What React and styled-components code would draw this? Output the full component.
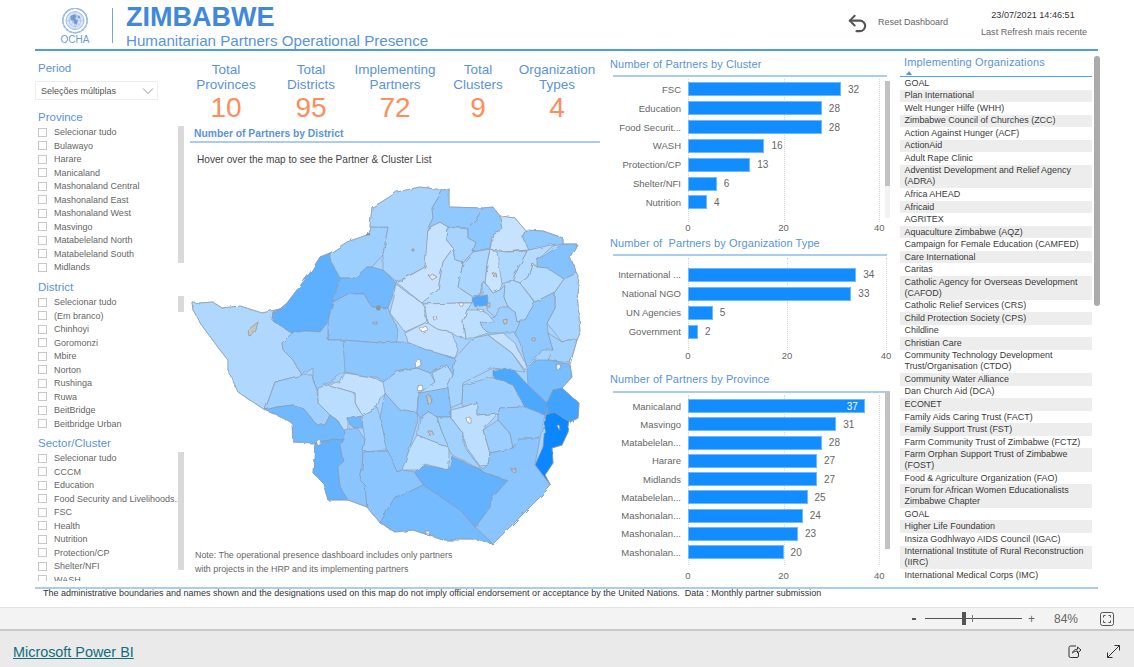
import React from 'react'
import styled, { createGlobalStyle } from 'styled-components'
import { Undo2 } from 'lucide-react'

const FONT = '"Liberation Sans", Arial, sans-serif'
const BLUE = '#5a93dc'

const provinces = ['Selecionar tudo', 'Bulawayo', 'Harare', 'Manicaland', 'Mashonaland Central', 'Mashonaland East', 'Mashonaland West', 'Masvingo', 'Matabeleland North', 'Matabeleland South', 'Midlands']
const districts = ['Selecionar tudo', '(Em branco)', 'Chinhoyi', 'Goromonzi', 'Mbire', 'Norton', 'Rushinga', 'Ruwa', 'BeitBridge', 'Beitbridge Urban']
const sectors = ['Selecionar tudo', 'CCCM', 'Education', 'Food Security and Livelihoods...', 'FSC', 'Health', 'Nutrition', 'Protection/CP', 'Shelter/NFI', 'WASH']

const kpis = [
  { lines: ['Total', 'Provinces'], value: 10, width: 72 },
  { lines: ['Total', 'Districts'], value: 95, width: 98 },
  { lines: ['Implementing', 'Partners'], value: 72, width: 70 },
  { lines: ['Total', 'Clusters'], value: 9, width: 96 },
  { lines: ['Organization', 'Types'], value: 4, width: 62 },
]

const clusterData = [['FSC', 32], ['Education', 28], ['Food Securit...', 28], ['WASH', 16], ['Protection/CP', 13], ['Shelter/NFI', 6], ['Nutrition', 4]]
const orgTypeData = [['International ...', 34], ['National NGO', 33], ['UN Agencies', 5], ['Government', 2]]
const provinceData = [['Manicaland', 37], ['Masvingo', 31], ['Matabelelan...', 28], ['Harare', 27], ['Midlands', 27], ['Matabelelan...', 25], ['Mashonalan...', 24], ['Mashonalan...', 23], ['Mashonalan...', 20]]

const orgs = [
  'GOAL', 'Plan International', 'Welt Hunger Hilfe (WHH)', 'Zimbabwe Council of Churches (ZCC)', 'Action Against Hunger (ACF)', 'ActionAid', 'Adult Rape Clinic',
  'Adventist Development and Relief Agency (ADRA)', 'Africa AHEAD', 'Africaid', 'AGRITEX', 'Aquaculture Zimbabwe (AQZ)', 'Campaign for Female Education (CAMFED)', 'Care International', 'Caritas',
  'Catholic Agency for Overseas Development (CAFOD)', 'Catholic Relief Services (CRS)', 'Child Protection Society (CPS)', 'Childline', 'Christian Care',
  'Community Technology Development Trust/Organisation (CTDO)', 'Community Water Alliance', 'Dan Church Aid (DCA)', 'ECONET', 'Family Aids Caring Trust (FACT)', 'Family Support Trust (FST)',
  'Farm Community Trust of Zimbabwe (FCTZ)', 'Farm Orphan Support Trust of Zimbabwe (FOST)', 'Food & Agriculture Organization (FAO)', 'Forum for African Women Educationalists Zimbabwe Chapter',
  'GOAL', 'Higher Life Foundation', 'Insiza Godhlwayo AIDS Council (IGAC)', 'International Institute of Rural Reconstruction (IIRC)', 'International Medical Corps (IMC)',
]

const outline = '192,302 200,303 213,302 222,308 240,306 262,313 280,309 287,303 310,273 320,257 330,253 347,242 367,235 370,227 372,207 380,203 397,192 420,187 443,190 449,188 449,207 483,208 493,207 500,216 515,218 525,230 543,231 563,238 563,244 577,244 570,257 577,273 579,277 577,293 579,317 580,333 577,340 570,365 572,377 562,388 573,398 579,403 578,418 570,422 568,432 562,445 552,448 553,463 545,475 551,486 493,544 477,540 443,540 413,530 395,532 380,523 367,507 348,500 328,500 323,483 313,473 315,443 293,442 292,423 287,420 265,410 247,398 238,392 228,370 228,360 220,350 203,327 193,310'

const districtShapes = [
  ['#b0d8ff', '192,302 200,303 213,302 222,308 240,306 262,313 280,309 273,312 272,320 292,333 282,343 283,350 293,360 302,375 275,382 265,410 247,398 238,392 228,370 228,360 220,350 203,327 193,310'],
  ['#5cb0ff', '280,309 287,303 310,273 320,257 330,253 332,263 340,278 333,300 330,313 328,322 320,332 305,331 292,333 272,320 273,312'],
  ['#9ed0ff', '330,253 347,242 367,235 370,227 388,227 383,255 372,267 367,267 355,278 340,278 332,263'],
  ['#a6d4ff', '372,207 380,203 397,192 420,187 443,190 432,208 433,218 428,228 427,250 425,267 397,282 383,270 383,255 388,227 370,227'],
  ['#70b8ff', '340,278 355,278 367,267 372,267 383,270 397,284 388,308 372,307 363,293 350,293 333,302'],
  ['#8cc6ff', '333,302 350,293 363,293 372,307 388,308 390,313 398,330 397,342 380,343 343,340 328,340 328,322 330,313'],
  ['#94cbff', '292,333 305,331 320,332 328,322 328,340 343,340 348,370 317,390 313,380 313,368 302,375 293,360 283,350 282,343'],
  ['#8cc6ff', '343,340 380,343 397,342 407,342 427,350 455,358 453,375 447,365 430,373 417,368 397,372 383,382 377,377 370,377 345,372'],
  ['#c6e2ff', '397,283 425,267 428,228 440,222 448,227 447,240 453,248 443,262 438,290 422,303'],
  ['#b5dbff', '422,303 438,290 443,262 453,248 455,260 463,263 458,287 473,297 472,303 460,303 423,304'],
  ['#a7d4ff', '448,227 468,229 468,238 476,242 473,252 463,263 455,260 453,248 447,240'],
  ['#90c9ff', '443,190 449,188 449,207 483,208 477,218 468,228 448,227 440,222 428,228 433,218 432,208'],
  ['#8dc7ff', '483,208 493,207 500,216 502,230 493,233 490,248 473,252 476,242 468,238 468,228 477,218'],
  ['#c6e2ff', '500,216 515,218 525,230 523,238 529,250 507,252 490,250 493,233 502,230'],
  ['#90c9ff', '525,230 543,231 563,238 563,244 529,250 523,238'],
  ['#83c2ff', '537,260 563,244 577,244 570,257 577,273 564,279 547,268 537,267'],
  ['#b5dbff', '507,252 529,250 555,244 537,260 537,267 532,263 528,277 520,283 512,280 527,251'],
  ['#add8ff', '490,250 507,252 527,251 512,280 502,284'],
  ['#c8e4ff', '490,250 497,252 502,284 500,290 493,293 485,283 487,263'],
  ['#abd6ff', '473,252 490,249 487,263 485,283 482,283 480,296 473,297 458,287 463,263'],
  ['#a7d4ff', '482,283 485,283 493,293 500,290 505,285 504,297 508,307 495,317 487,310 488,295 482,296'],
  ['#b0d9ff', '512,280 520,283 535,303 525,320 517,322 515,312 508,307 504,297 505,285'],
  ['#b5dbff', '520,283 528,277 532,263 537,267 547,268 564,279 555,292 535,302'],
  ['#a9d5ff', '564,279 577,273 579,277 577,293 579,317 580,333 577,340 568,340 562,342 547,323 555,308 555,292'],
  ['#8ec8ff', '535,302 555,292 555,308 547,323 548,333 553,350 542,350 535,360 527,367 520,343 515,333 520,320 525,320'],
  ['#a0d1ff', '548,333 562,342 568,340 577,340 570,363 562,362 548,360 553,350'],
  ['#9ccfff', '480,322 495,317 500,307 508,307 515,312 517,322 520,322 515,333 503,333 488,333 482,327'],
  ['#c2e1ff', '488,335 503,333 515,343 527,367 525,370 512,353'],
  ['#a6d4ff', '455,358 473,338 488,335 512,353 525,372 493,368 463,383 462,403 450,408 447,388 453,375'],
  ['#c6e2ff', '423,304 460,303 472,303 467,310 463,322 465,338 458,337 452,333 437,329 427,322 425,307'],
  ['#c6e2ff', '397,285 423,304 427,322 405,332 390,313'],
  ['#c3e1ff', '405,333 427,322 437,329 452,333 458,350 455,358 427,350 407,342'],
  ['#bcdfff', '467,310 480,310 487,313 495,323 480,322 482,327 488,333 473,338 465,338 463,322'],
  ['#4fa8ff', '472,299 482,296 487,295 488,305 475,307'],
  ['#c3e1ff', '328,385 333,382 340,383 345,373 370,377 383,382 392,385 388,392 380,398 377,407 362,415 355,403 355,393'],
  ['#b9ddff', '318,388 328,385 355,393 355,403 362,415 348,418 348,428 345,432 337,420 330,415 318,403'],
  ['#9fd0ff', '265,410 275,382 302,375 312,375 313,380 317,390 318,403 330,415 325,425 317,425 303,408 293,405 277,407'],
  ['#70b9ff', '265,410 277,407 293,405 303,408 317,425 325,425 330,415 337,420 345,432 343,438 327,442 315,443 293,442 292,423 287,420'],
  ['#63b1ff', '315,443 327,442 343,438 340,445 343,460 338,467 340,487 348,500 328,500 323,483 313,473'],
  ['#8ac5ff', '343,438 345,432 348,428 357,428 365,440 363,452 362,470 360,480 365,485 367,507 348,500 340,487 338,467 343,460 340,445'],
  ['#70b9ff', '348,418 360,415 363,428 355,428 350,425'],
  ['#9fd0ff', '362,415 377,407 380,417 388,450 363,452 365,440 363,428'],
  ['#8cc6ff', '385,393 400,410 417,413 418,420 403,470 397,472 388,453 380,417'],
  ['#8ac5ff', '363,452 388,451 397,472 403,470 415,472 423,485 403,495 395,497 380,523 367,507 365,485 360,480 362,470'],
  ['#a7d4ff', '383,382 397,372 417,368 430,373 435,382 418,397 417,413 400,410 385,393'],
  ['#86c3ff', '419,393 448,387 451,410 451,417 437,417 428,412 420,418 417,413'],
  ['#b0d9ff', '432,373 447,365 453,375 447,388 419,393 435,382'],
  ['#a7d4ff', '428,412 437,417 442,432 450,448 417,435 420,418'],
  ['#bbdfff', '417,435 450,448 450,457 448,470 425,464 418,470 402,470 410,448'],
  ['#a0d1ff', '437,417 450,417 462,432 465,448 480,467 480,470 468,463 452,455 442,432'],
  ['#bcdfff', '451,410 463,407 477,402 477,415 498,413 483,430 490,453 488,465 480,466 467,448 462,432 451,418'],
  ['#9ccfff', '463,385 493,377 513,385 525,407 500,408 498,413 477,415 477,402 463,407 462,403'],
  ['#4ba8ff', '493,370 513,369 528,385 547,403 545,415 525,407 513,385 493,377'],
  ['#78bdff', '527,370 537,360 550,360 570,365 572,377 562,388 553,390 547,403 528,385'],
  ['#43a3ff', '553,390 562,388 573,398 579,403 578,418 570,422 555,413 546,413 547,403'],
  ['#0e87ff', '546,413 555,413 570,422 568,432 562,445 552,448 553,463 545,475 551,486 535,465 543,447'],
  ['#9ccfff', '483,430 498,420 510,433 513,448 490,453'],
  ['#8fc9ff', '498,413 500,408 525,407 545,415 540,438 520,438 513,448 510,433 498,420'],
  ['#8ac5ff', '480,470 488,465 490,453 513,448 520,438 540,438 535,465 551,486 493,544 475,528 490,507 492,498 508,480 495,477'],
  ['#62b2ff', '415,472 422,465 450,470 453,457 480,470 495,477 508,480 492,498 490,507 475,527 460,510 423,485'],
  ['#74bbff', '423,485 460,510 475,527 493,544 477,540 443,540 413,530 395,532 380,523 395,497 403,495'],
]

const towns = [
  ['#c8c4bf', '248,330 253,326 258,322 256,330 255,333 249,336'],
  ['#c8c4bf', '427,397 430,395 432,402 428,405'],
  ['#c8c4bf', '428,431 431,430 433,434 429,435'],
  ['#ffffff', '467,419 471,418 471,423 468,423'],
  ['#c8c4bf', '511,470 516,468 514,472'],
  ['#dfe3e8', '557,425 559,425 560,428 558,429'],
  ['#ffffff', '416,386 422,385 423,390 418,391'],
  ['#ffffff', '420,329 426,326 428,330 422,332'],
  ['#ffffff', '415,361 420,359 421,365 416,368'],
  ['#dfe3e8', '433,317 436,315 437,320 434,320'],
  ['#d2c4b4', '503,320 507,319 507,323 504,324'],
  ['#d2c4b4', '532,338 535,338 535,341 532,341'],
  ['#d2c4b4', '493,274 496,273 497,277 494,277'],
  ['#d2c4b4', '412,249 414,249 414,251 412,251'],
  ['#e6e6e6', '429,276 433,274 437,277 432,280'],
  ['#ffffff', '459,303 463,303 463,306 460,306'],
  ['#ffffff', '477,309 484,310 481,312'],
  ['#d2c4b4', '487,303 490,303 490,307 487,307'],
  ['#e6edf5', '316,441 320,439 322,443 318,446'],
  ['#c8c4bf', '373,322 377,322 377,324 373,324'],
  ['#a09a94', '377,306 380,306 380,310 377,310'],
  ['#a09a94', '366,235 369,232 370,235'],
  ['#e9eef5', '555,365 560,364 561,368 556,369'],
  ['#e9eef5', '425,531 430,531 431,535 427,535'],
]

const Global = createGlobalStyle`
  html, body { margin: 0; padding: 0; background: #fff; overflow: hidden; }
  body { font-family: ${FONT}; }
`
const Page = styled.div`
  width: 1134px;
  height: 667px;
  display: flex;
  flex-direction: column;
`
const Report = styled.div`
  height: 607px;
  display: flex;
  flex-direction: column;
  position: relative;
`
const Header = styled.header`
  height: 49px;
  margin: 0 36px 0 35px;
  padding: 0 0 0 25px;
  border-bottom: 2px solid #4a9bea;
  display: flex;
  align-items: flex-start;
`
const Logo = styled.div`
  width: 30px;
  margin-top: 8px;
  display: flex;
  flex-direction: column;
  align-items: center;
  color: #6d9bd6;
  font-size: 10px;
  line-height: 11px;
`
const Divider = styled.div`
  width: 1px;
  height: 35px;
  margin: 8px 13px 0 22px;
  background: #6fa6e4;
`
const TitleBlock = styled.div`
  padding-top: 4px;
`
const MainTitle = styled.div`
  color: #3f88dc;
  font-size: 27px;
  font-weight: 700;
  line-height: 27px;
`
const SubTitle = styled.div`
  color: #5b93d9;
  font-size: 15.15px;
  line-height: 18px;
  margin-top: 1px;
`
const ResetBox = styled.div`
  margin-left: auto;
  margin-top: 12px;
  display: flex;
  align-items: flex-start;
  color: #666;
  font-size: 9px;
`
const ResetText = styled.span`
  margin: 5px 33px 0 9px;
  line-height: 11px;
`
const Stamp = styled.div`
  width: 104px;
  margin-right: 13px;
  padding-top: 9px;
  text-align: center;
  font-size: 9.1px;
  line-height: 12px;
  color: #666;
  white-space: nowrap;
`
const StampDate = styled.div`
  color: #333;
  margin-bottom: 5px;
`
const Body = styled.div`
  height: 536px;
  padding-left: 35px;
  display: grid;
  grid-template-columns: 155px 418px 292px 200px;
`
const LeftCol = styled.div`
  padding-top: 9px;
  display: flex;
  flex-direction: column;
`
const SlicerTitle = styled.div`
  height: 16px;
  line-height: 16px;
  padding-left: 3px;
  margin-top: ${p => p.$mt || 0}px;
  color: ${BLUE};
  font-size: 11.5px;
`
const Dropdown = styled.div`
  height: 17px;
  margin-top: 5px;
  padding-left: 5px;
  width: 116px;
  border: 1px solid #eee;
  display: flex;
  align-items: center;
  justify-content: space-between;
  color: #555;
  font-size: 9px;
`
const Chevron = styled.svg`
  width: 12px;
  height: 8px;
  margin-right: 3px;
`
const SlicerList = styled.div`
  position: relative;
  height: ${p => p.$h}px;
  margin-top: 0.5px;
  overflow: hidden;
`
const SlicerRow = styled.div`
  height: 13.5px;
  width: 146px;
  padding-left: 3px;
  display: flex;
  align-items: center;
  color: #666;
  font-size: 9px;
`
const Check = styled.span`
  flex: none;
  width: 7px;
  height: 7px;
  margin-right: 7px;
  border: 1px solid #c8c8c8;
`
const RowLabel = styled.span`
  white-space: nowrap;
`
const ScrollThumb = styled.div`
  position: absolute;
  right: ${p => p.$right ?? 6}px;
  top: ${p => p.$top || 0}px;
  width: ${p => p.$w || 6}px;
  height: ${p => p.$h}px;
  background: ${p => p.$color || '#d9d9d9'};
  border-radius: ${p => p.$round ? '3px' : '0'};
`
const MidCol = styled.div`
  padding-top: 11px;
  display: flex;
  flex-direction: column;
`
const KpiRow = styled.div`
  display: flex;
  height: 63px;
`
const Kpi = styled.div`
  width: ${p => p.$w}px;
  display: flex;
  flex-direction: column;
  align-items: center;
`
const KpiTitle = styled.div`
  color: ${BLUE};
  font-size: 13.5px;
  line-height: 15px;
  white-space: nowrap;
`
const KpiValue = styled.div`
  color: #fd8d5b;
  font-size: 28px;
  line-height: 28px;
  margin-top: 2px;
`
const SectionTitle = styled.div`
  color: ${BLUE};
  font-size: 10.3px;
  font-weight: 700;
  line-height: 15px;
  padding: 1px 0 0 4px;
`
const Rule = styled.div`
  height: 2px;
  margin: ${p => p.$m || '0'};
  background: #a9cdef;
`
const Hover = styled.div`
  margin: 11px 0 0 7px;
  height: 12px;
  color: #444;
  font-size: 10.1px;
  line-height: 12px;
`
const MapSvg = styled.svg`
  display: block;
  width: 400px;
  height: 370px;
  margin-top: 14px;
`
const MapNote = styled.div`
  margin: -2px 0 0 5px;
  color: #666;
  font-size: 8.9px;
  line-height: 14px;
`
const ChartCol = styled.div`
  padding-top: 5px;
  display: flex;
  flex-direction: column;
`
const ChartTitle = styled.div`
  color: ${BLUE};
  font-size: 11px;
  line-height: 16px;
  padding-left: 2px;
  letter-spacing: 0.1px;
  margin-top: ${p => p.$mt || 0}px;
  white-space: pre;
`
const ChartRule = styled(Rule)`
  margin: ${p => p.$mt || 3}px 3px 0 5px;
  width: 274px;
`
const Plot = styled.div`
  position: relative;
  height: ${p => p.$h}px;
  padding-top: ${p => p.$pt}px;
`
const GridLine = styled.div`
  position: absolute;
  top: 2px;
  bottom: 0;
  left: ${p => p.$x}px;
  border-left: 1px dotted #d8d8d8;
`
const BarRow = styled.div`
  position: relative;
  height: ${p => p.$pitch}px;
  display: flex;
  align-items: center;
`
const BarLabel = styled.div`
  width: 73px;
  margin-right: 7px;
  text-align: right;
  color: #666;
  font-size: 9.5px;
  white-space: nowrap;
`
const Bar = styled.div`
  box-sizing: border-box;
  height: 14px;
  background: #118dff;
  border: 1px solid #70b8ff;
  display: flex;
  align-items: center;
  justify-content: flex-end;
  color: #fff;
  font-size: 10px;
  padding-right: 6px;
`
const BarValue = styled.div`
  margin-left: 7px;
  color: #666;
  font-size: 10px;
`
const Axis = styled.div`
  display: flex;
  justify-content: space-between;
  margin-left: 80px;
  width: ${p => p.$w}px;
  height: 12px;
  margin-top: ${p => p.$mt || 0}px;
  color: #666;
  font-size: 9.5px;
  line-height: 12px;
`
const Tick = styled.div`
  width: 0;
  display: flex;
  justify-content: center;
`
const OrgCol = styled.div`
  position: relative;
  padding-top: 5px;
  height: 530px;
`
const OrgTitle = styled.div`
  color: ${BLUE};
  font-size: 11px;
  line-height: 12px;
  padding: 0 0 0 4px;
  letter-spacing: 0.15px;
`
const Caret = styled.div`
  width: 0;
  height: 0;
  margin: 3px 0 0 6px;
  border-left: 3.5px solid transparent;
  border-right: 3.5px solid transparent;
  border-bottom: 4px solid ${BLUE};
`
const OrgTable = styled.div`
  width: 192px;
  height: 504px;
  margin-top: 1px;
  border-top: 1px solid #4da3f5;
  overflow: hidden;
`
const OrgRow = styled.div`
  padding: 0.77px 4.5px;
  color: #3a3a3a;
  font-size: 8.95px;
  line-height: 11px;
  background: ${p => p.$odd ? '#ededed' : '#fff'};
`
const Disclaimer = styled.div`
  height: 16px;
  padding-left: 43px;
  color: #333;
  font-size: 9px;
  line-height: 9px;
  white-space: pre;
`
const ZoomBar = styled.div`
  box-sizing: border-box;
  height: 24px;
  background: #f3f3f3;
  border-top: 1px solid #e3e3e3;
  border-bottom: 2px solid #c9c9c9;
  display: flex;
  align-items: center;
  color: #666;
  font-size: 12px;
  padding-left: 912px;
`
const ZoomMinus = styled.span`
  width: 4px;
  height: 2px;
  background: #555;
`
const Slider = styled.div`
  position: relative;
  width: 97px;
  height: 1px;
  margin: 0 6px 0 9px;
  background: #555;
`
const SliderThumb = styled.div`
  position: absolute;
  left: 37px;
  top: -6px;
  width: 4px;
  height: 13px;
  background: #555;
`
const SliderTick = styled.div`
  position: absolute;
  left: 47px;
  top: -3px;
  width: 1px;
  height: 7px;
  background: #777;
`
const ZoomPct = styled.span`
  margin: 0 0 0 19px;
`
const FitIcon = styled.svg`
  width: 14px;
  height: 14px;
  margin-left: 22px;
`
const Footer = styled.footer`
  flex: 1;
  background: #eaeaea;
  display: flex;
  align-items: center;
  padding: 5px 13px 0 13px;
`
const BrandLink = styled.a`
  color: #106e7c;
  font-size: 14.4px;
  text-decoration: underline;
`
const FootIcons = styled.div`
  margin-left: auto;
  display: flex;
  gap: 24px;
`
const FootIcon = styled.svg`
  width: 15px;
  height: 15px;
  display: block;
`

function UnLogo() {
  const leaves = []
  for (let a = 30; a <= 150; a += 20) {
    const r = (a * Math.PI) / 180
    const x = Math.cos(r) * 13.5
    const y = Math.sin(r) * 13.5
    leaves.push(<ellipse key={'r' + a} cx={15 + x} cy={14 + y} rx="1.1" ry="2.6" transform={`rotate(${a} ${15 + x} ${14 + y})`} fill="#9dbde6" />)
  }
  for (let a = -80; a <= 10; a += 18) {
    const r = (a * Math.PI) / 180
    const x = Math.cos(r) * 13.5
    const y = Math.sin(r) * 13.5
    leaves.push(<ellipse key={'a' + a} cx={15 + x} cy={14 + y} rx="1.1" ry="2.6" transform={`rotate(${a} ${15 + x} ${14 + y})`} fill="#9dbde6" />)
    leaves.push(<ellipse key={'b' + a} cx={15 - x} cy={14 + y} rx="1.1" ry="2.6" transform={`rotate(${-a} ${15 - x} ${14 + y})`} fill="#9dbde6" />)
  }
  return (
    <svg width="28" height="26" viewBox="0 0 30 29">
      {leaves}
      <circle cx="15" cy="14" r="10" fill="#dbe7f6" stroke="#7fa8de" strokeWidth="0.8" />
      <circle cx="15" cy="14" r="6.5" fill="none" stroke="#8fb3e2" strokeWidth="0.6" />
      <circle cx="15" cy="14" r="3.2" fill="none" stroke="#8fb3e2" strokeWidth="0.6" />
      <path d="M5 14H25M15 4V24M8 7L22 21M22 7L8 21" stroke="#8fb3e2" strokeWidth="0.5" />
      <path d="M10 9l4-2 3 2-2 3 3 2-1 5-3-2-1-3-3-1zM18 8l3 2-1 2-2-1z" fill="#6f9ad6" />
    </svg>
  )
}

function Slicer({ items, height, thumbH }) {
  return (
    <SlicerList $h={height}>
      {items.map(item => (
        <SlicerRow key={item}>
          <Check />
          <RowLabel>{item}</RowLabel>
        </SlicerRow>
      ))}
      <ScrollThumb $h={thumbH} />
    </SlicerList>
  )
}

function BarChart({ data, scale, pitch, height, top, axisGap, thumb, inside }) {
  return (
    <>
      <Plot $h={height} $pt={top}>
        {[0, 20, 40].map(t => <GridLine key={t} $x={80 + t * scale} />)}
        {data.map(([label, value], i) => (
          <BarRow key={label + i} $pitch={pitch}>
            <BarLabel>{label}</BarLabel>
            <Bar style={{ width: value * scale }}>{inside && i === 0 ? value : null}</Bar>
            {inside && i === 0 ? null : <BarValue>{value}</BarValue>}
          </BarRow>
        ))}
        {thumb}
      </Plot>
      <Axis $w={40 * scale} $mt={axisGap}>
        {[0, 20, 40].map(t => <Tick key={t}>{t}</Tick>)}
      </Axis>
    </>
  )
}

export default function App() {
  return (
    <Page>
      <Global />
      <Report>
        <Header>
          <Logo>
            <UnLogo />
            OCHA
          </Logo>
          <Divider />
          <TitleBlock>
            <MainTitle>ZIMBABWE</MainTitle>
            <SubTitle>Humanitarian Partners Operational Presence</SubTitle>
          </TitleBlock>
          <ResetBox>
            <Undo2 size={23} color="#555" strokeWidth={2.2} />
            <ResetText>Reset Dashboard</ResetText>
          </ResetBox>
          <Stamp>
            <StampDate>23/07/2021 14:46:51</StampDate>
            Last Refresh mais recente
          </Stamp>
        </Header>
        <Body>
          <LeftCol>
            <SlicerTitle>Period</SlicerTitle>
            <Dropdown>
              Seleções múltiplas
              <Chevron viewBox="0 0 12 8"><path d="M1 1.5L6 6.5L11 1.5" fill="none" stroke="#888" strokeWidth="0.9" /></Chevron>
            </Dropdown>
            <SlicerTitle $mt={9}>Province</SlicerTitle>
            <Slicer items={provinces} height={148} thumbH={137} />
            <SlicerTitle $mt={5.5}>District</SlicerTitle>
            <Slicer items={districts} height={135} thumbH={16} />
            <SlicerTitle $mt={4.5}>Sector/Cluster</SlicerTitle>
            <Slicer items={sectors} height={129} thumbH={118} />
          </LeftCol>
          <MidCol>
            <KpiRow>
              {kpis.map(k => (
                <Kpi key={k.lines[1]} $w={k.width}>
                  <KpiTitle>{k.lines[0]}</KpiTitle>
                  <KpiTitle>{k.lines[1]}</KpiTitle>
                  <KpiValue>{k.value}</KpiValue>
                </Kpi>
              ))}
            </KpiRow>
            <SectionTitle>Number of Partners by District</SectionTitle>
            <Rule $m="0 8px 0 0" />
            <Hover>Hover over the map to see the Partner &amp; Cluster List</Hover>
            <MapSvg viewBox="190 180 400 370">
              <defs>
                <filter id="rough" x="-5%" y="-5%" width="110%" height="110%">
                  <feTurbulence type="fractalNoise" baseFrequency="0.11" numOctaves="2" seed="4" />
                  <feDisplacementMap in="SourceGraphic" scale="3.5" />
                </filter>
              </defs>
              <g filter="url(#rough)">
                <polygon points={outline} fill="#a7d4ff" stroke="#a9b6c4" strokeWidth="1" />
                {districtShapes.map(([fill, pts], i) => (
                  <polygon key={i} points={pts} fill={fill} stroke="#8d99a8" strokeWidth="0.7" strokeLinejoin="round" />
                ))}
                {towns.map(([fill, pts], i) => (
                  <polygon key={i} points={pts} fill={fill} stroke="#80868c" strokeWidth="0.6" strokeLinejoin="round" />
                ))}
              </g>
            </MapSvg>
            <MapNote>
              Note: The operational presence dashboard includes only partners<br />
              with projects in the HRP and its implementing partners
            </MapNote>
          </MidCol>
          <ChartCol>
            <ChartTitle>Number of Partners by Cluster</ChartTitle>
            <ChartRule />
            <BarChart
              data={clusterData}
              scale={4.78}
              pitch={18.85}
              height={142}
              top={3}
              axisGap={0}
              thumb={<>
                <ScrollThumb $right={10} $top={4} $w={5} $h={137} $color="#f3f3f3" />
                <ScrollThumb $right={10} $top={4} $w={5} $h={105} $color="#c2c2c2" />
              </>}
            />
            <ChartTitle $mt={1}>Number of  Partners by Organization Type</ChartTitle>
            <ChartRule />
            <BarChart data={orgTypeData} scale={4.95} pitch={19} height={85} top={9} axisGap={0} />
            <ChartTitle $mt={9}>Number of Partners by Province</ChartTitle>
            <ChartRule $mt={4} />
            <BarChart
              data={provinceData}
              scale={4.78}
              pitch={18.25}
              height={168}
              top={4}
              axisGap={5}
              thumb={<ScrollThumb $right={10} $top={-2} $w={5} $h={158} $color="#c2c2c2" />}
              inside
            />
          </ChartCol>
          <OrgCol>
            <OrgTitle>Implementing Organizations</OrgTitle>
            <Caret />
            <OrgTable>
              {orgs.map((o, i) => <OrgRow key={o + i} $odd={i % 2 === 1}>{o}</OrgRow>)}
            </OrgTable>
            <ScrollThumb $right={0} $top={5} $h={250} $color="#ababab" $round />
          </OrgCol>
        </Body>
        <Rule $m="0 36px 0 35px" />
        <Disclaimer>The administrative boundaries and names shown and the designations used on this map do not imply official endorsement or acceptance by the United Nations.  Data : Monthly partner submission</Disclaimer>
      </Report>
      <ZoomBar>
        <ZoomMinus />
        <Slider><SliderThumb /><SliderTick /></Slider>
        <span>+</span>
        <ZoomPct>84%</ZoomPct>
        <FitIcon viewBox="0 0 14 14">
          <rect x="0.5" y="0.5" width="13" height="13" rx="2" fill="none" stroke="#555" />
          <path d="M3.5 5.5V3.5H5.5M8.5 3.5H10.5V5.5M10.5 8.5V10.5H8.5M5.5 10.5H3.5V8.5" fill="none" stroke="#555" />
        </FitIcon>
      </ZoomBar>
      <Footer>
        <BrandLink href="#">Microsoft Power BI</BrandLink>
        <FootIcons>
          <FootIcon viewBox="0 0 15 15">
            <path d="M9 2H3.5A1.5 1.5 0 0 0 2 3.5V12A1.5 1.5 0 0 0 3.5 13.5H10A1.5 1.5 0 0 0 11.5 12V9" fill="none" stroke="#333" />
            <path d="M5.5 9C6 6.5 8 5.2 10.5 5.2V3L14 6L10.5 9V7C8.5 7 6.8 7.7 5.5 9Z" fill="none" stroke="#333" />
          </FootIcon>
          <FootIcon viewBox="0 0 15 15">
            <path d="M1.5 13.5L13.5 1.5M8.5 1.5H13.5V6.5M1.5 8.5V13.5H6.5" fill="none" stroke="#333" />
          </FootIcon>
        </FootIcons>
      </Footer>
    </Page>
  )
}
